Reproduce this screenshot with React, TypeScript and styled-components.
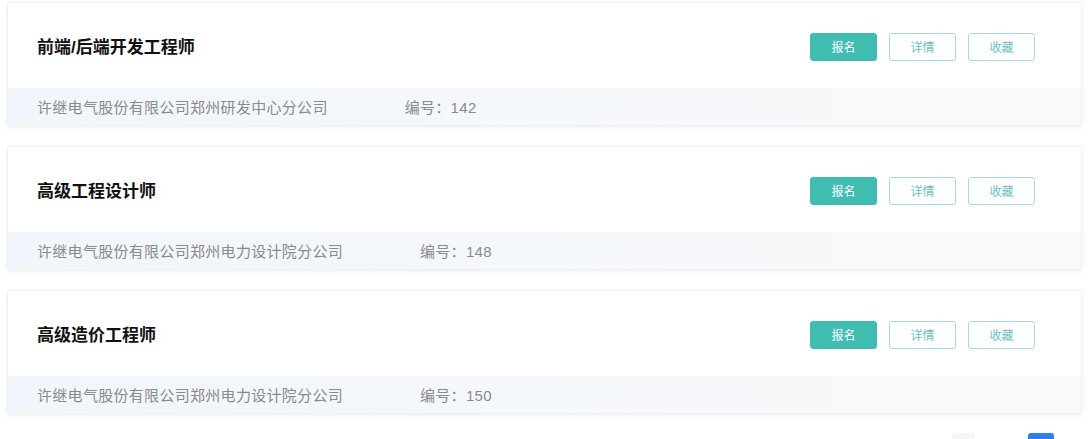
import React from "react";
import styled, { createGlobalStyle } from "styled-components";

const GlobalStyle = createGlobalStyle`
  html, body {
    margin: 0;
    padding: 0;
    background: #ffffff;
    font-family: "Liberation Sans", "Noto Sans CJK SC", sans-serif;
  }
`;

const jobs = [
  { title: "前端/后端开发工程师", company: "许继电气股份有限公司郑州研发中心分公司", no: 142 },
  { title: "高级工程设计师", company: "许继电气股份有限公司郑州电力设计院分公司", no: 148 },
  { title: "高级造价工程师", company: "许继电气股份有限公司郑州电力设计院分公司", no: 150 },
];

const Page = styled.div`
  padding: 2px 8px 0 7px;
  display: flex;
  flex-direction: column;
  gap: 20px;
`;

const Card = styled.div`
  height: 124px;
  background: #fff;
  border: 1px solid #f0f0f0;
  border-radius: 2px;
  box-shadow: 0 2px 6px rgba(0, 0, 0, 0.06);
  display: flex;
  flex-direction: column;
  box-sizing: border-box;
  overflow: hidden;
`;

const Head = styled.div`
  flex: 1;
  display: flex;
  align-items: center;
  justify-content: space-between;
  padding: 2px 46px 0 29px;
`;

const Title = styled.div`
  font-size: 17px;
  font-weight: 700;
  color: #111;
  margin-top: -2px;
`;

const Actions = styled.div`
  display: flex;
  gap: 12px;
`;

const Btn = styled.button<{ $primary?: boolean }>`
  width: 67px;
  height: 28px;
  border-radius: 3px;
  font-family: inherit;
  font-size: 12px;
  cursor: pointer;
  border: 1px solid ${(p) => (p.$primary ? "#3fbdb1" : "#a3ddd8")};
  background: ${(p) => (p.$primary ? "#3fbdb1" : "#fff")};
  color: ${(p) => (p.$primary ? "#fff" : "#5cc6bd")};
`;

const Foot = styled.div`
  height: 37px;
  flex-shrink: 0;
  display: flex;
  align-items: center;
  padding-left: 29px;
  background: linear-gradient(to right, #f0f6fc, #f9f9fa);
  font-size: 15px;
  letter-spacing: 0.3px;
  color: #8a8a8a;
`;

const Code = styled.span`
  margin-left: 77px;
`;

const Pager = styled.div`
  display: flex;
  justify-content: flex-end;
  align-items: flex-start;
  gap: 53px;
  padding-right: 28px;
  margin-top: -1px;
  height: 6px;
`;

const PageItem = styled.div<{ $active?: boolean }>`
  width: ${(p) => (p.$active ? "26px" : "23px")};
  height: 26px;
  border-radius: 3px;
  background: ${(p) => (p.$active ? "#2e7cf6" : "#f6f6f7")};
`;

export default function App() {
  return (
    <>
      <GlobalStyle />
      <Page>
        {jobs.map((j) => (
          <Card key={j.no}>
            <Head>
              <Title>{j.title}</Title>
              <Actions>
                <Btn $primary>报名</Btn>
                <Btn>详情</Btn>
                <Btn>收藏</Btn>
              </Actions>
            </Head>
            <Foot>
              <span>{j.company}</span>
              <Code>编号：{j.no}</Code>
            </Foot>
          </Card>
        ))}
        <Pager>
          <PageItem />
          <PageItem $active />
        </Pager>
      </Page>
    </>
  );
}
